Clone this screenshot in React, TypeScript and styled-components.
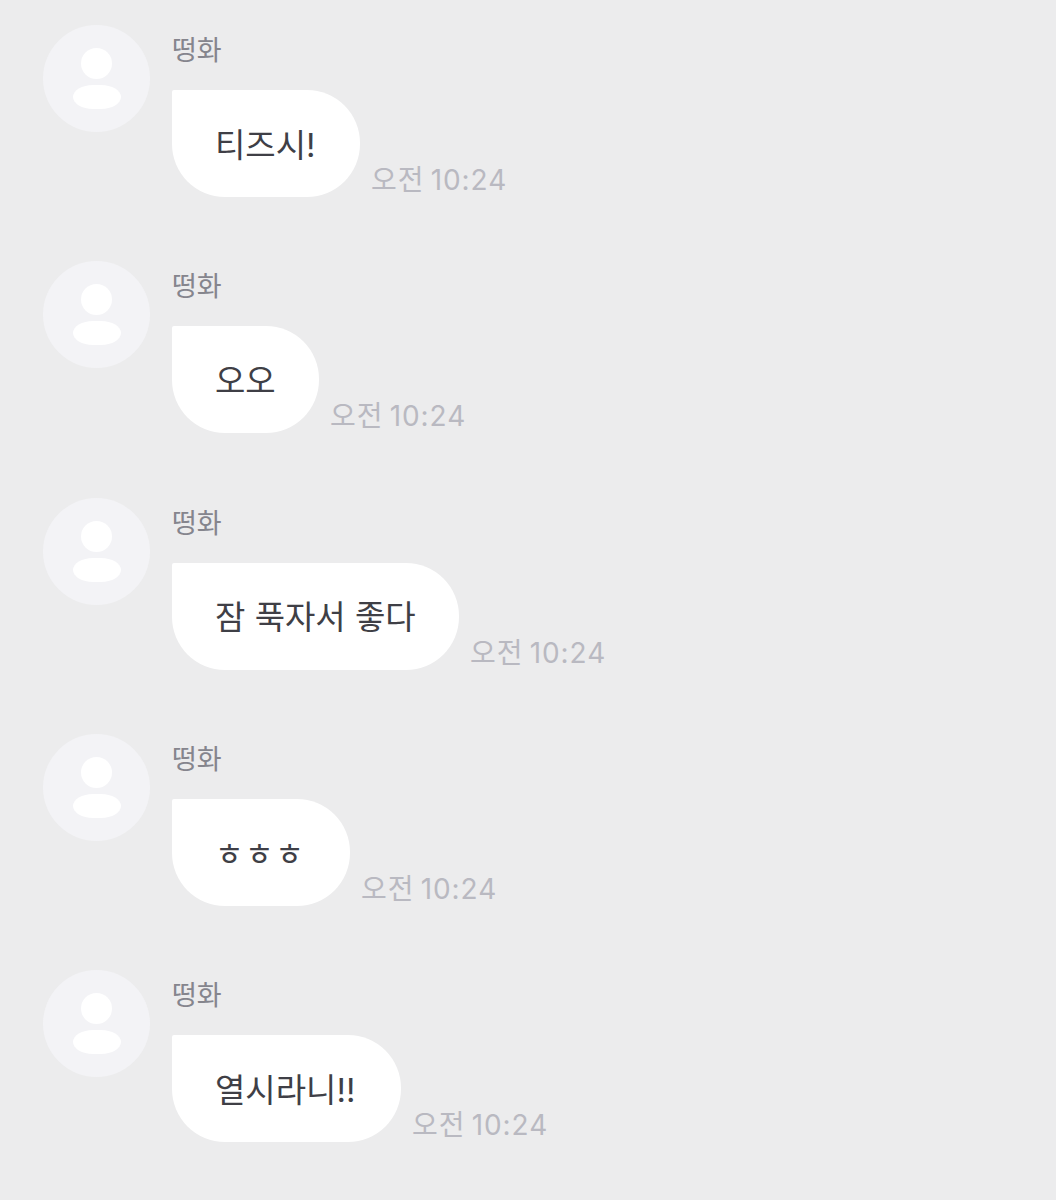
import React from "react";
import styled, { createGlobalStyle } from "styled-components";

const GlobalStyle = createGlobalStyle`
  html, body {
    margin: 0;
    padding: 0;
    background: #ececed;
  }
  body {
    font-family: "Inter", "Noto Sans CJK KR", sans-serif;
  }
`;

const ChatList = styled.div`
  display: flex;
  flex-direction: column;
  gap: 64.3px;
  height: 1200px;
  box-sizing: border-box;
  padding: 25px 0 0 43px;
  overflow: hidden;
`;

const MessageRow = styled.div`
  display: flex;
  gap: 22px;
  height: 172px;
`;

const AvatarCircle = styled.div`
  flex: none;
  display: flex;
  flex-direction: column;
  align-items: center;
  width: 107px;
  height: 107px;
  padding-top: 23px;
  box-sizing: border-box;
  border-radius: 50%;
  background: #f3f3f6;
`;

const AvatarHead = styled.div`
  width: 31px;
  height: 31px;
  border-radius: 50%;
  background: #fff;
`;

const AvatarBody = styled.div`
  width: 48px;
  height: 24px;
  margin-top: 6px;
  border-radius: 20px / 12px;
  background: #fff;
`;

const MessageColumn = styled.div`
  display: flex;
  flex-direction: column;
  align-items: flex-start;
`;

const SenderName = styled.div`
  height: 65px;
  padding-top: 9px;
  box-sizing: border-box;
  font-size: 27px;
  line-height: 33px;
  color: #85858d;
`;

const BubbleLine = styled.div`
  display: flex;
  align-items: flex-end;
  gap: 11px;
`;

const Bubble = styled.div<{ $width: number }>`
  display: flex;
  align-items: center;
  width: ${(p) => p.$width}px;
  height: 107px;
  padding: 0 0 2px 43px;
  box-sizing: border-box;
  border-radius: 2px 53px 53px 53px;
  background: #fff;
  font-size: 33px;
  color: #3f3f46;
  white-space: nowrap;
`;

const SmallJamo = styled.span`
  font-size: 31px;
  letter-spacing: 1.6px;
`;

const TimeStamp = styled.div`
  font-size: 28px;
  line-height: 34px;
  letter-spacing: 0.95px;
  word-spacing: -2.6px;
  color: #b9b9c1;
  white-space: nowrap;
`;

const messages = [
  { text: <>티즈시!</>, width: 188 },
  { text: <>오오</>, width: 147 },
  { text: <>잠 푹자서 좋다</>, width: 287 },
  { text: <SmallJamo>ㅎㅎㅎ</SmallJamo>, width: 178 },
  { text: <>열시라니!!</>, width: 229 },
];

export default function App() {
  return (
    <>
      <GlobalStyle />
      <ChatList>
        {messages.map((m, i) => (
          <MessageRow key={i}>
            <AvatarCircle>
              <AvatarHead />
              <AvatarBody />
            </AvatarCircle>
            <MessageColumn>
              <SenderName>떵화</SenderName>
              <BubbleLine>
                <Bubble $width={m.width}>{m.text}</Bubble>
                <TimeStamp>오전 10:24</TimeStamp>
              </BubbleLine>
            </MessageColumn>
          </MessageRow>
        ))}
      </ChatList>
    </>
  );
}
